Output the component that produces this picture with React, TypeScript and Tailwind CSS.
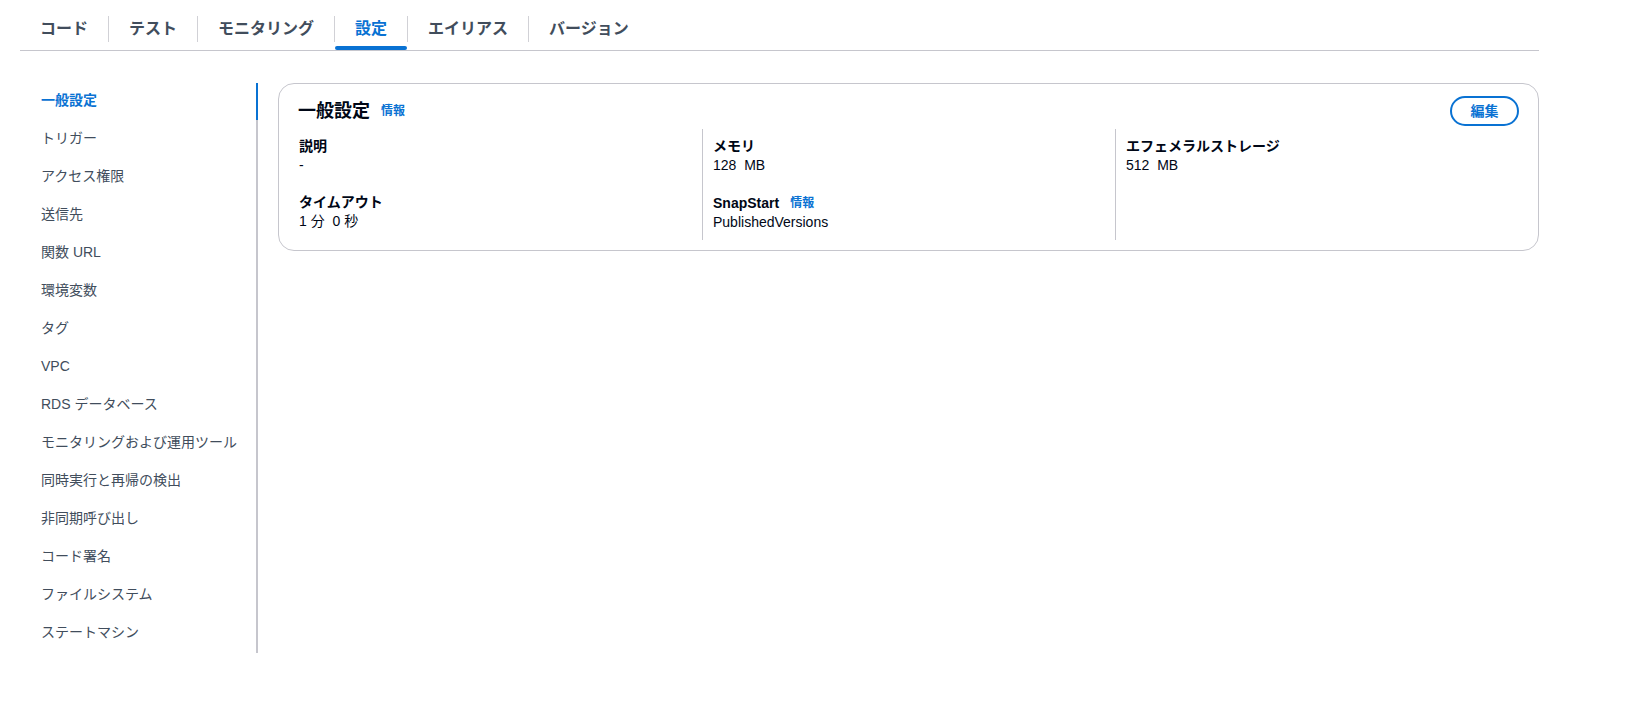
import { useState } from "react";

// ─── Data ─────────────────────────────────────────────────────────────────────

const TABS = ["コード", "テスト", "モニタリング", "設定", "エイリアス", "バージョン"];

const NAV = [
  "一般設定",
  "トリガー",
  "アクセス権限",
  "送信先",
  "関数 URL",
  "環境変数",
  "タグ",
  "VPC",
  "RDS データベース",
  "モニタリングおよび運用ツール",
  "同時実行と再帰の検出",
  "非同期呼び出し",
  "コード署名",
  "ファイルシステム",
  "ステートマシン",
];

type Field = { label: string; value: string; info?: boolean };

const COLUMNS: Field[][] = [
  [
    { label: "説明", value: "-" },
    { label: "タイムアウト", value: "1 分\u00a0\u00a00 秒" },
  ],
  [
    { label: "メモリ", value: "128\u00a0\u00a0MB" },
    { label: "SnapStart", value: "PublishedVersions", info: true },
  ],
  [{ label: "エフェメラルストレージ", value: "512\u00a0\u00a0MB" }],
];

// ─── Pieces ───────────────────────────────────────────────────────────────────

function InfoLink() {
  return (
    <a href="#" className="ml-[11px] text-[12px] font-bold leading-5 text-[#0972d3]">
      情報
    </a>
  );
}

function Tabs({ active, onSelect }: { active: number; onSelect: (i: number) => void }) {
  return (
    <div className="flex border-b border-[#c6c6cd]">
      {TABS.map((t, i) => (
        <div key={t} className="flex items-center">
          {i > 0 && <span className="mt-[8px] h-[26px] w-px bg-[#d1d1d6]" />}
          <button
            type="button"
            onClick={() => onSelect(i)}
            className={`relative flex h-[50px] items-center px-5 pt-[8px] text-[16px] font-bold ${
              i === active ? "text-[#0972d3]" : "text-[#414d5c]"
            }`}
          >
            {t}
            {i === active && (
              <span className="absolute bottom-0 left-0 right-0 h-[4px] rounded-t-[2px] rounded-b-[2px] bg-[#0972d3]" />
            )}
          </button>
        </div>
      ))}
    </div>
  );
}

function SideNav({ active, onSelect }: { active: number; onSelect: (i: number) => void }) {
  return (
    <nav className="w-[238px] shrink-0">
      <ul className="border-r-2 border-[#c6c6cd]">
        {NAV.map((n, i) => (
          <li key={n} className="relative">
            <button
              type="button"
              onClick={() => onSelect(i)}
              className={`flex h-[38px] w-full items-center pb-[3px] pl-[21px] text-left text-[14px] ${
                i === active ? "font-bold text-[#0972d3]" : "text-[#414d5c]"
              }`}
            >
              {n}
            </button>
            {i === active && (
              <span className="absolute -right-[2px] top-0 h-[37px] w-[2px] bg-[#0972d3]" />
            )}
          </li>
        ))}
      </ul>
    </nav>
  );
}

function GeneralSettings() {
  return (
    <section className="flex-1 rounded-[16px] border border-[#c6c6cd] bg-white">
      <div className="flex items-center justify-between px-[19px] pt-[12px]">
        <div className="flex items-center">
          <h2 className="text-[18px] font-bold leading-7 text-[#000716]">一般設定</h2>
          <InfoLink />
        </div>
        <button
          type="button"
          className="h-[30px] w-[69px] rounded-full border-2 border-[#0972d3] text-[14px] font-bold text-[#0972d3]"
        >
          編集
        </button>
      </div>

      <div className="grid grid-cols-3 px-[10px] pb-[10px] pt-[3px]">
        {COLUMNS.map((col, ci) => (
          <div
            key={ci}
            className={`flex flex-col gap-[18px] pb-[8px] pl-[10px] pt-[8px] ${
              ci > 0 ? "border-l border-[#c6c6cd]" : ""
            }`}
          >
            {col.map((f) => (
              <div key={f.label} className="text-[14px] leading-[19px] text-[#000716]">
                <div className="flex items-center font-bold">
                  {f.label}
                  {f.info && <InfoLink />}
                </div>
                <div>{f.value}</div>
              </div>
            ))}
          </div>
        ))}
      </div>
    </section>
  );
}

// ─── App ──────────────────────────────────────────────────────────────────────

export default function App() {
  const [tab, setTab] = useState(3);
  const [nav, setNav] = useState(0);

  return (
    <div className="min-h-screen bg-white font-['Liberation_Sans','Noto_Sans_CJK_JP',sans-serif] antialiased">
      <div className="ml-5 w-[1519px]">
        <Tabs active={tab} onSelect={setTab} />
        <div className="mt-[32px] flex items-start gap-5">
          <SideNav active={nav} onSelect={setNav} />
          <GeneralSettings />
        </div>
      </div>
    </div>
  );
}
